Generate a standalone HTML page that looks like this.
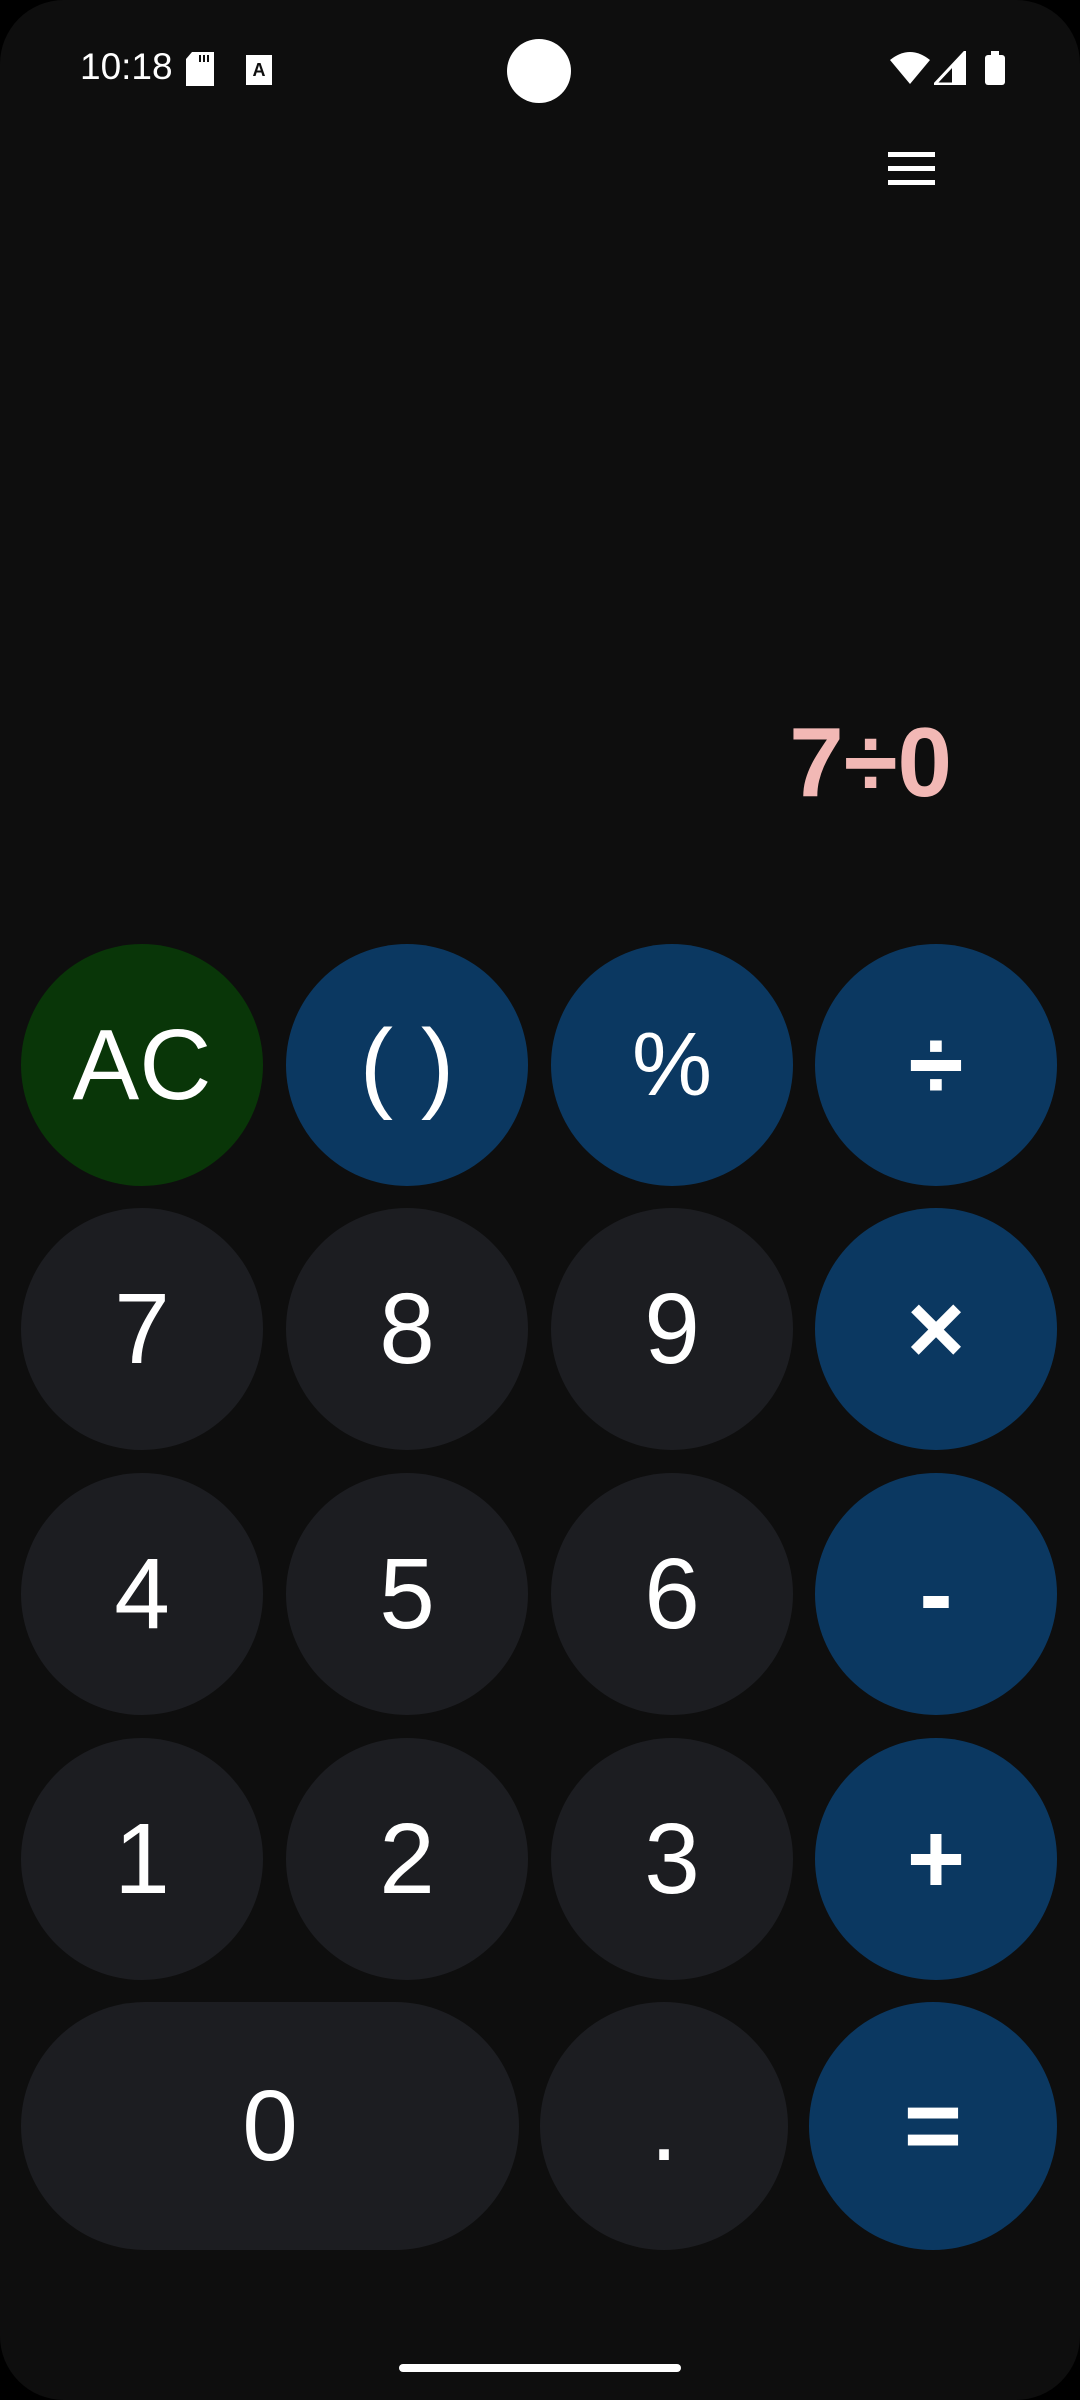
<!DOCTYPE html>
<html><head><meta charset="utf-8"><style>
html,body{margin:0;padding:0;background:#000;}
body{width:1080px;height:2400px;position:relative;overflow:hidden;font-family:"Liberation Sans",sans-serif;color:#fff;}
.scr{position:absolute;left:0;top:0;width:1080px;height:2400px;background:#0e0e0e;border-radius:64px;}
.b{position:absolute;width:242px;height:242px;border-radius:50%;display:flex;align-items:center;justify-content:center;font-size:100px;}
.g{background:#1c1d21}.u{background:#0b3861}.a{background:#093608}
.o{font-weight:bold}
</style></head><body><div class="scr"></div>
<div style="position:absolute;left:80px;top:46px;font-size:37px;">10:18</div>
<svg style="position:absolute;left:186px;top:52px" width="28" height="34"><path d="M6 0H28V34H0V7Z" fill="#fff"/><rect x="13" y="3" width="2" height="7" fill="#0e0e0e"/><rect x="17" y="3" width="2" height="7" fill="#0e0e0e"/><rect x="21" y="3" width="2" height="7" fill="#0e0e0e"/></svg>
<svg style="position:absolute;left:246px;top:55px" width="26" height="30"><rect width="26" height="30" fill="#fff"/><text x="13" y="21" font-size="18" font-weight="bold" text-anchor="middle" fill="#0e0e0e" font-family="Liberation Sans">A</text></svg>
<div style="position:absolute;left:507px;top:39px;width:64px;height:64px;border-radius:50%;background:#fff"></div>
<svg style="position:absolute;left:890px;top:50px" width="40" height="36"><path d="M0 10Q20 -6 40 10L20 34Z" fill="#fff"/></svg>
<svg style="position:absolute;left:934px;top:51px" width="32" height="34"><path d="M31 1V33H1Z" fill="none" stroke="#fff" stroke-width="3"/><path d="M18 14V33H31V1Z" fill="#fff"/></svg>
<div style="position:absolute;left:985px;top:55px;width:20px;height:30px;background:#fff;border-radius:3px"></div>
<div style="position:absolute;left:991px;top:51px;width:8px;height:5px;background:#fff"></div>
<div style="position:absolute;left:888px;top:152px;width:47px;height:5px;background:#fff;box-shadow:0 14px 0 #fff,0 28px 0 #fff"></div>
<div style="position:absolute;right:128px;top:706px;font-size:98px;font-weight:bold;color:#f2b8b5;">7÷0</div>
<div class="b a" style="left:21px;top:944px">AC</div>
<div class="b u" style="left:286px;top:944px">( )</div>
<div class="b u" style="left:551px;top:944px;font-size:90px">%</div>
<div class="b u o" style="left:815px;top:944px">÷</div>
<div class="b g" style="left:21px;top:1208px">7</div>
<div class="b g" style="left:286px;top:1208px">8</div>
<div class="b g" style="left:551px;top:1208px">9</div>
<div class="b u o" style="left:815px;top:1208px">×</div>
<div class="b g" style="left:21px;top:1473px">4</div>
<div class="b g" style="left:286px;top:1473px">5</div>
<div class="b g" style="left:551px;top:1473px">6</div>
<div class="b u o" style="left:815px;top:1473px">-</div>
<div class="b g" style="left:21px;top:1738px">1</div>
<div class="b g" style="left:286px;top:1738px">2</div>
<div class="b g" style="left:551px;top:1738px">3</div>
<div class="b u o" style="left:815px;top:1738px">+</div>
<div class="b g" style="left:21px;top:2002px;width:498px;height:248px;border-radius:124px">0</div>
<div class="b g" style="left:540px;top:2002px;width:248px;height:248px">.</div>
<div class="b u o" style="left:809px;top:2002px;width:248px;height:248px">=</div>
<div style="position:absolute;left:399px;top:2364px;width:282px;height:8px;border-radius:4px;background:#fff"></div>
</body></html>
